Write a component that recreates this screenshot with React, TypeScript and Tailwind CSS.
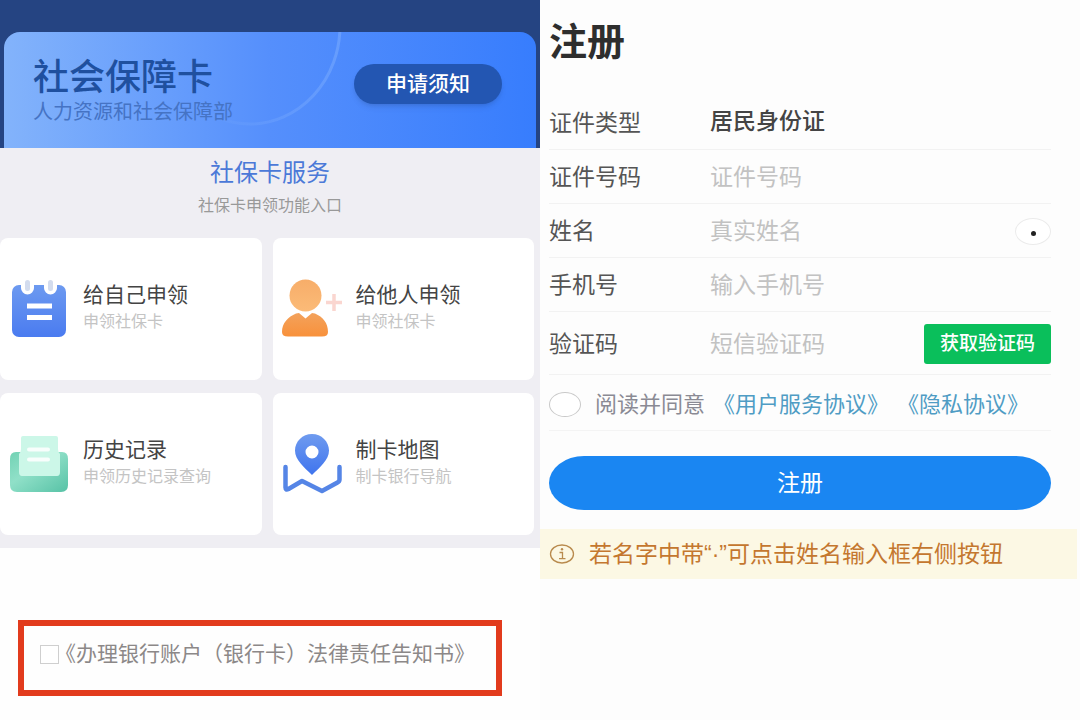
import { useState } from "react";
import type { ReactNode } from "react";

function CalendarIcon() {
  return (
    <svg viewBox="0 0 60 60" className="size-15 shrink-0" aria-hidden="true">
      <defs>
        <linearGradient id="calendar" x1="0" y1="0" x2="0" y2="1">
          <stop offset="0" stopColor="#6d9af0" />
          <stop offset="1" stopColor="#4a7bf0" />
        </linearGradient>
      </defs>
      <rect x="3" y="6" width="54" height="52" rx="7" fill="url(#calendar)" />
      <path d="M12 4h13v5a6.500 6.500 0 0 1-13 0zM35 4h13v5a6.500 6.500 0 0 1-13 0z" fill="#fff" />
      <rect x="16" y="1" width="5" height="11" rx="2.500" fill="#d3dcee" />
      <rect x="39" y="1" width="5" height="11" rx="2.500" fill="#d3dcee" />
      <rect x="18" y="24.500" width="25" height="5" fill="#fff" />
      <rect x="18" y="36" width="25" height="5" fill="#fff" />
    </svg>
  );
}

function PersonIcon() {
  return (
    <svg viewBox="0 0 60 60" className="size-15 shrink-0" aria-hidden="true">
      <defs>
        <linearGradient id="head" x1="0" y1="0" x2="0" y2="1">
          <stop offset="0" stopColor="#f7ad69" />
          <stop offset="1" stopColor="#fbbb78" />
        </linearGradient>
        <linearGradient id="torso" x1="0" y1="0" x2="0" y2="1">
          <stop offset="0" stopColor="#f3a25c" />
          <stop offset="1" stopColor="#f8913b" />
        </linearGradient>
      </defs>
      <path
        d="M14 34.500 17 34l6.500 5.500L30 34l3 .5C41 38 46 44 46 53q0 4.500-6 4.500H6Q0 57.500 0 53c0-9 6-15 14-18.500z"
        fill="url(#torso)"
      />
      <circle cx="23.500" cy="16.500" r="16" fill="url(#head)" />
      <path d="M52 15v17M44 23.500h16" stroke="#fad6d0" strokeWidth="3.500" />
    </svg>
  );
}

function HistoryIcon() {
  return (
    <svg viewBox="0 0 60 60" className="size-15 shrink-0" aria-hidden="true">
      <defs>
        <linearGradient id="tray" x1="0" y1="0" x2="1" y2="1">
          <stop offset="0" stopColor="#72d2b4" />
          <stop offset="0.4" stopColor="#90e0c8" />
          <stop offset="1" stopColor="#57c2a6" />
        </linearGradient>
      </defs>
      <path
        d="M7 18h46q6 0 6 7v26q0 7-7 7H8q-7 0-7-7V25q0-7 6-7z"
        fill="url(#tray)"
      />
      <path d="M14 2h33q2 0 2 2v11q0 3 2 5v18q0 4-3 4H13q-3 0-3-4V20q2-2 2-5V4q0-2 2-2z" fill="#ccf7e8" />
      <path d="M20 15.500h19M20 25.500h19" stroke="#fff" strokeWidth="4" strokeLinecap="round" strokeOpacity="0.85" />
    </svg>
  );
}

function MapIcon() {
  return (
    <svg viewBox="0 0 60 60" className="size-15 shrink-0" aria-hidden="true">
      <defs>
        <linearGradient id="pin" x1="0" y1="0" x2="0" y2="1">
          <stop offset="0" stopColor="#6f9bef" />
          <stop offset="1" stopColor="#3f74ee" />
        </linearGradient>
      </defs>
      <path
        d="M3.500 33v20.500q0 3 3 1.500L20 47l20 10 15.500-8.500q2-1 2-3V33"
        fill="none"
        stroke="#5585e6"
        strokeWidth="4.500"
        strokeLinecap="round"
        strokeLinejoin="round"
      />
      <path
        fillRule="evenodd"
        d="M30 0c9.500 0 17 7.500 17 16.500C47 26 38 33 30 41 22 33 13 26 13 16.500 13 7.500 20.500 0 30 0zm0 11.500a6.500 6.500 0 1 0 0 13 6.500 6.500 0 0 0 0-13z"
        fill="url(#pin)"
      />
    </svg>
  );
}

const services = [
  { title: "给自己申领", text: "申领社保卡", icon: <CalendarIcon /> },
  { title: "给他人申领", text: "申领社保卡", icon: <PersonIcon /> },
  { title: "历史记录", text: "申领历史记录查询", icon: <HistoryIcon /> },
  { title: "制卡地图", text: "制卡银行导航", icon: <MapIcon /> },
];

function CardServices() {
  const [accepted, setAccepted] = useState(false);

  return (
    <section className="bg-[#fefefe]">
      <header className="bg-[#254482] px-1 pt-8">
        <div className="relative flex items-start justify-between overflow-hidden rounded-t-2xl bg-linear-to-r from-[#83b3fb] via-[#558ffc] to-[#377dfd] pt-6 pr-[34px] pb-6 pl-[29px]">
          <svg
            viewBox="0 0 200 100"
            className="absolute top-0 left-[146px] h-[100px] w-[200px]"
            aria-hidden="true"
          >
            <defs>
              <linearGradient id="ring" x1="0" y1="0" x2="1" y2="0">
                <stop offset="0.2" stopColor="#8bb8ff" stopOpacity="0" />
                <stop offset="1" stopColor="#8bb8ff" stopOpacity="0.4" />
              </linearGradient>
            </defs>
            <ellipse
              cx="100"
              cy="-6"
              rx="90"
              ry="98"
              fill="none"
              stroke="url(#ring)"
              strokeWidth="3"
            />
          </svg>
          <div className="relative">
            <h1 className="text-[36px] leading-11 font-medium text-[#1f509f]">社会保障卡</h1>
            <p className="text-[20px] leading-6 text-[#4573c4]">人力资源和社会保障部</p>
          </div>
          <button className="relative mt-2 h-10 rounded-full bg-[#2356b2] px-8 text-[21px] font-medium text-white shadow-md">
            申请须知
          </button>
        </div>
      </header>

      <div className="bg-[#efeef3] pt-2 pb-[13px] text-center">
        <h2 className="text-[24px] leading-[34px] text-[#4b79d8]">社保卡服务</h2>
        <p className="text-[16px] leading-8 text-[#999]">社保卡申领功能入口</p>
        <div className="mt-4 mr-[6px] grid grid-cols-2 gap-x-[11px] gap-y-[13px]">
          {services.map((s) => (
            <a
              key={s.title}
              href="#"
              className="flex h-[142px] items-center gap-[14px] rounded-lg bg-white pl-[9px] text-left"
            >
              {s.icon}
              <span className="flex flex-col pb-[2px]">
                <span className="text-[21px] leading-7 text-[#444]">{s.title}</span>
                <span className="text-[16px] leading-[26px] text-[#c4c4c4]">{s.text}</span>
              </span>
            </a>
          ))}
        </div>
      </div>

      <div className="mt-[72px] mr-[38px] ml-[18px] border-[6px] border-[#e23b1d] pt-3 pb-5 pl-4">
        <label className="flex items-center text-[21px] leading-8 whitespace-nowrap text-[#8c8888]">
          <input
            type="checkbox"
            checked={accepted}
            onChange={() => setAccepted(!accepted)}
            className="size-[19px] shrink-0 appearance-none border border-[#cfcfcf] bg-white checked:bg-[#8c8888]"
          />
          <span className="-ml-1">《办理银行账户（银行卡）法律责任告知书》</span>
        </label>
      </div>
    </section>
  );
}

function Row({ id, label, children }: { id: string; label: string; children: ReactNode }) {
  return (
    <div className="flex items-center border-b border-[#f2f2f2] pt-3 pb-[10px]">
      <label htmlFor={id} className="w-[161px] shrink-0 leading-[31px] text-[#555]">
        {label}
      </label>
      {children}
    </div>
  );
}

const inputClass =
  "h-[31px] w-full min-w-0 flex-1 bg-transparent text-[#333] outline-none placeholder:text-[#c2c2c2]";

function Register() {
  const [agree, setAgree] = useState(false);

  return (
    <section className="bg-[#fdfdfd] pt-4 text-[23px]">
      <form className="pr-[29px] pl-[9px]" onSubmit={(e) => e.preventDefault()}>
        <h1 className="mb-7 text-[38px] leading-[52px] font-bold text-[#2e2e2e]">注册</h1>

        <Row id="type" label="证件类型">
          <select
            id="type"
            className="h-[31px] flex-1 appearance-none bg-transparent pb-1 leading-[27px] font-medium text-[#444] outline-none"
          >
            <option>居民身份证</option>
          </select>
        </Row>
        <Row id="number" label="证件号码">
          <input id="number" type="text" placeholder="证件号码" className={inputClass} />
        </Row>
        <Row id="name" label="姓名">
          <input id="name" type="text" placeholder="真实姓名" className={inputClass} />
          <button
            type="button"
            aria-label="·"
            className="flex h-[27px] w-9 items-center justify-center rounded-[50%] border border-[#ebebeb] bg-white pt-1"
          >
            <span className="size-[5px] rounded-full bg-[#222]" />
          </button>
        </Row>
        <Row id="phone" label="手机号">
          <input id="phone" type="tel" placeholder="输入手机号" className={inputClass} />
        </Row>
        <Row id="code" label="验证码">
          <input id="code" type="text" placeholder="短信验证码" className={inputClass} />
          <button
            type="button"
            className="h-10 shrink-0 rounded-[3px] bg-[#0abf5b] px-4 text-[19px] font-medium text-white"
          >
            获取验证码
          </button>
        </Row>

        <div className="flex items-center border-b border-[#f4f4f4] pt-[14px] pb-[10px] text-[22px] leading-[31px] whitespace-nowrap">
          <input
            id="agree"
            type="checkbox"
            checked={agree}
            onChange={() => setAgree(!agree)}
            className="mr-[14px] h-[25px] w-8 shrink-0 appearance-none rounded-[50%] border border-[#c9c9c9] bg-white checked:bg-[#1a86f2]"
          />
          <label htmlFor="agree" className="mr-2 text-[#8a8a94]">
            阅读并同意
          </label>
          <a href="#" className="mr-2 text-[#4f9cc4]">
            《用户服务协议》
          </a>
          <a href="#" className="text-[#4f9cc4]">
            《隐私协议》
          </a>
        </div>

        <button
          type="submit"
          className="mt-[25px] h-[54px] w-full rounded-[7%/50%] bg-[#1a86f2] text-white"
        >
          注册
        </button>
      </form>

      <p className="mt-[19px] mr-[3px] flex items-center gap-[14px] bg-[#fcf8e4] py-2 pl-[9px] leading-[34px] whitespace-nowrap text-[#c4772f]">
        <svg viewBox="0 0 26 20" className="h-5 w-[26px] shrink-0" aria-hidden="true">
          <ellipse cx="13" cy="10" rx="11.500" ry="9" fill="none" stroke="#b98b4e" strokeWidth="1.300" />
          <path d="M10.500 8.500h3v6M10 14.700h6.500" fill="none" stroke="#b98b4e" strokeWidth="1.300" />
          <circle cx="13" cy="5.300" r="1.200" fill="#b98b4e" />
        </svg>
        <span>若名字中带“·”可点击姓名输入框右侧按钮</span>
      </p>
    </section>
  );
}

export default function App() {
  return (
    <main className="grid min-h-screen grid-cols-2 bg-[#fdfdfd] font-['Liberation_Sans','Noto_Sans_CJK_SC',sans-serif]">
      <CardServices />
      <Register />
    </main>
  );
}
